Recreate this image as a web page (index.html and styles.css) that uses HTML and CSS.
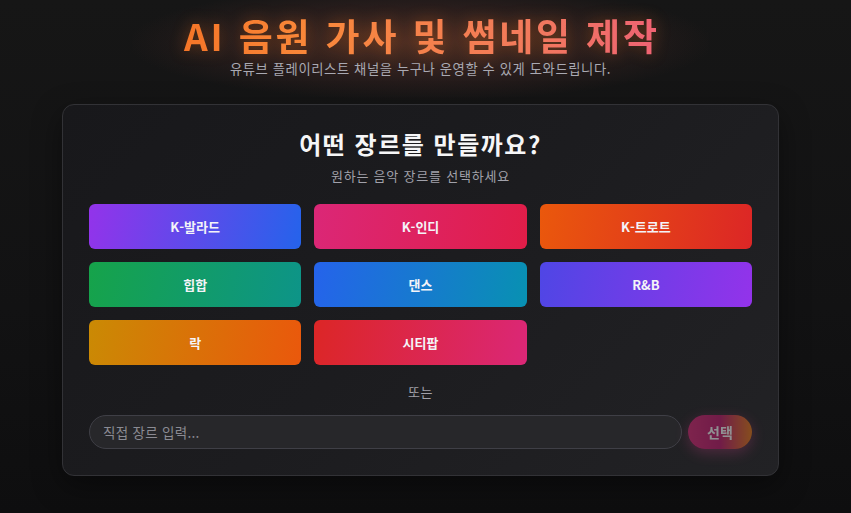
FILE: index.html
```html
<!DOCTYPE html>
<html lang="ko">
<head>
<meta charset="utf-8">
<link rel="stylesheet" href="styles.css">
</head>
<body>
<div class="page">
  <header class="hero">
    <h1 class="title">AI 음원 가사 및 썸네일 제작</h1>
    <p class="subtitle">유튜브 플레이리스트 채널을 누구나 운영할 수 있게 도와드립니다.</p>
  </header>
  <main class="card">
    <h2 class="card-title">어떤 장르를 만들까요?</h2>
    <p class="card-sub">원하는 음악 장르를 선택하세요</p>
    <div class="grid">
      <button class="genre g-ballad">K-발라드</button>
      <button class="genre g-indie">K-인디</button>
      <button class="genre g-trot">K-트로트</button>
      <button class="genre g-hiphop">힙합</button>
      <button class="genre g-dance">댄스</button>
      <button class="genre g-rnb">R&amp;B</button>
      <button class="genre g-rock">락</button>
      <button class="genre g-citypop">시티팝</button>
    </div>
    <p class="or">또는</p>
    <div class="custom">
      <input class="custom-input" type="text" placeholder="직접 장르 입력...">
      <button class="select-btn" disabled>선택</button>
    </div>
  </main>
</div>
</body>
</html>
```

FILE: styles.css
```css
* { box-sizing: border-box; }
html, body { margin: 0; height: 100%; }
body {
  background: linear-gradient(180deg, #161616 0%, #121213 60%, #0e0e0f 100%);
  font-family: "Noto Sans CJK KR", "Noto Sans", sans-serif;
  color: #fff;
  padding-right: 10px;
}
.page {
  width: 717px;
  margin: 0 auto;
  display: flex;
  flex-direction: column;
  align-items: stretch;
}
.hero {
  text-align: center;
  padding-top: 13px;
  position: relative;
}
.hero::before {
  content: "";
  position: absolute;
  left: 70px; right: 70px; top: -15px; height: 115px;
  background: radial-gradient(ellipse at center, rgba(170, 85, 55, 0.38) 0%, rgba(120, 60, 55, 0.18) 45%, rgba(0,0,0,0) 72%);
  pointer-events: none;
}
.title {
  position: relative;
  margin: 0;
  font-size: 37px;
  line-height: 44px;
  font-weight: 700;
  letter-spacing: 2.8px;
  padding-left: 2.8px;
  background: linear-gradient(90deg, #f26417 0%, #f9883a 35%, #f27a5c 65%, #ec4d8a 100%);
  -webkit-background-clip: text;
  background-clip: text;
  color: transparent;
  filter: drop-shadow(0 0 8px rgba(249, 115, 22, 0.35));
}
.subtitle {
  position: relative;
  margin: 3px 0 0;
  font-size: 13.3px;
  line-height: 18px;
  letter-spacing: 0.6px;
  color: #a9a9b2;
}
.card {
  margin-top: 26px;
  border: 1px solid #323236;
  border-radius: 12px;
  background: linear-gradient(135deg, #18181b 0%, #1c1c1f 50%, #222225 100%);
  padding: 23px 26px 26px;
  box-shadow: 0 10px 30px rgba(0,0,0,0.4);
}
.card-title {
  margin: 0;
  text-align: center;
  font-size: 24px;
  line-height: 32px;
  font-weight: 700;
  letter-spacing: 1.5px;
  color: #f6f6f7;
}
.card-sub {
  margin: 7px 0 0;
  text-align: center;
  font-size: 13px;
  line-height: 18px;
  letter-spacing: 0.8px;
  color: #a1a1aa;
}
.grid {
  margin-top: 19px;
  display: grid;
  grid-template-columns: repeat(3, 1fr);
  column-gap: 13px;
  row-gap: 13px;
}
.genre {
  height: 45px;
  border: none;
  border-radius: 6px;
  color: #f4f4f8;
  font-family: inherit;
  font-size: 13px;
  font-weight: 600;
  cursor: pointer;
}
.g-ballad { background: linear-gradient(100deg, #9333ea, #2563eb); }
.g-indie { background: linear-gradient(100deg, #db2777, #e11d48); }
.g-trot { background: linear-gradient(100deg, #ea580c, #dc2626); }
.g-hiphop { background: linear-gradient(100deg, #16a34a, #0d9488); }
.g-dance { background: linear-gradient(100deg, #2563eb, #0891b2); }
.g-rnb { background: linear-gradient(100deg, #4f46e5, #9333ea); }
.g-rock { background: linear-gradient(100deg, #ca8a04, #ea580c); }
.g-citypop { background: linear-gradient(100deg, #dc2626, #db2777); }
.or {
  margin: 18px 0 0;
  text-align: center;
  font-size: 13px;
  line-height: 18px;
  letter-spacing: 0.5px;
  color: #a1a1aa;
}
.custom {
  margin-top: 14px;
  display: flex;
  gap: 6px;
}
.custom-input {
  flex: 1;
  height: 34px;
  border: 1px solid #3f3f46;
  border-radius: 17px;
  background: #27272a;
  color: #ddd;
  padding: 0 13px;
  font-family: inherit;
  font-size: 13.5px;
  letter-spacing: 0.3px;
  outline: none;
}
.custom-input::placeholder { color: #8b8b93; }
.select-btn {
  width: 64px;
  height: 34px;
  border: none;
  border-radius: 17px;
  background: linear-gradient(90deg, #db2777 0%, #c0186c 50%, #ea7a18 100%);
  color: #fff;
  font-family: inherit;
  font-size: 14px;
  font-weight: 700;
  opacity: 0.5;
  box-shadow: 0 4px 14px rgba(236, 72, 153, 0.45);
}
```
